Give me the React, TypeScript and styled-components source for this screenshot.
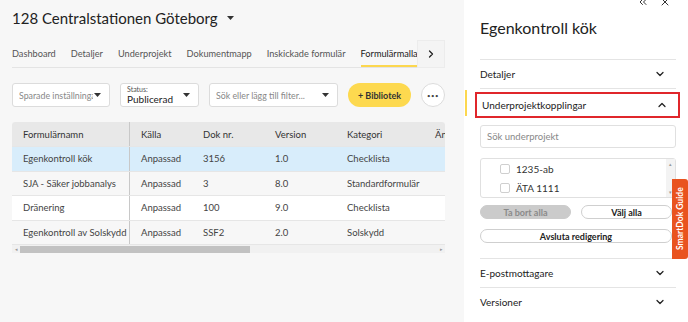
import React from 'react';
import styled, { createGlobalStyle } from 'styled-components';
import { ChevronDown, ChevronUp, ChevronRight, ChevronsLeft, X } from 'lucide-react';

const GlobalStyle = createGlobalStyle`
  html, body {
    margin: 0;
    padding: 0;
    background: #ffffff;
    font-family: Lato, "Open Sans", "Liberation Sans", sans-serif;
    color: #333;
    overflow: hidden;
  }
  * { box-sizing: border-box; }
`;

const tabs = ['Dashboard', 'Detaljer', 'Underprojekt', 'Dokumentmapp', 'Inskickade formulär', 'Formulärmallar'];

const rows = [
  { name: 'Egenkontroll kök', source: 'Anpassad', doc: '3156', version: '1.0', category: 'Checklista' },
  { name: 'SJA - Säker jobbanalys', source: 'Anpassad', doc: '3', version: '8.0', category: 'Standardformulär' },
  { name: 'Dränering', source: 'Anpassad', doc: '100', version: '9.0', category: 'Checklista' },
  { name: 'Egenkontroll av Solskydd', source: 'Anpassad', doc: 'SSF2', version: '2.0', category: 'Solskydd' },
];

const columns = [118, 62, 72, 72, 88, 40];

const Caret = () => (
  <svg width="7" height="4" viewBox="0 0 7 4" style={{ flexShrink: 0 }}>
    <path d="M0 0h7L3.5 4z" fill="#333" />
  </svg>
);

const App: React.FC = () => {
  return (
    <Page>
      <GlobalStyle />
      <Main>
        <TitleRow>
          <Title>128 Centralstationen Göteborg</Title>
          <Caret />
        </TitleRow>

        <TabBar>
          <Tabs>
            {tabs.map((t) => (
              <Tab key={t} $active={t === 'Formulärmallar'}>{t}</Tab>
            ))}
          </Tabs>
          <TabScroll>
            <ChevronRight size={12} strokeWidth={2.5} color="#222" />
          </TabScroll>
        </TabBar>

        <Filters>
          <Select $width={98}>
            <Placeholder>Sparade inställningar</Placeholder>
            <Caret />
          </Select>
          <Select $width={79}>
            <StatusValue>
              <small>Status:</small>
              <span>Publicerad</span>
            </StatusValue>
            <Caret />
          </Select>
          <Select $width={129}>
            <Placeholder>Sök eller lägg till filter...</Placeholder>
            <Caret />
          </Select>
          <LibraryButton>+ Bibliotek</LibraryButton>
          <MoreButton>•••</MoreButton>
        </Filters>

        <Table>
          <HeaderRow>
            {['Formulärnamn', 'Källa', 'Dok nr.', 'Version', 'Kategori', 'Ändrad'].map((h, i) => (
              <Cell key={h} $width={columns[i]} $frozen={i === 0}>{h}</Cell>
            ))}
          </HeaderRow>
          {rows.map((r, idx) => (
            <Row key={r.name} $variant={idx === 0 ? 'selected' : idx % 2 === 1 ? 'alt' : 'plain'}>
              <Cell $width={columns[0]} $frozen>{r.name}</Cell>
              <Cell $width={columns[1]}>{r.source}</Cell>
              <Cell $width={columns[2]}>{r.doc}</Cell>
              <Cell $width={columns[3]}>{r.version}</Cell>
              <Cell $width={columns[4]}>{r.category}</Cell>
              <Cell $width={columns[5]} />
            </Row>
          ))}
          <HScroll>
            <ScrollArrow>◂</ScrollArrow>
            <ScrollTrack>
              <ScrollThumb />
            </ScrollTrack>
            <ScrollArrow>▸</ScrollArrow>
          </HScroll>
        </Table>
      </Main>

      <Panel>
        <ActiveMarker />
        <PanelTools>
          <ChevronsLeft size={12} strokeWidth={2} color="#333" />
          <X size={12} strokeWidth={2} color="#333" />
        </PanelTools>
        <PanelTitle>Egenkontroll kök</PanelTitle>

        <Section>
          <SectionHeader>
            <span>Detaljer</span>
            <ChevronDown size={12} strokeWidth={2.5} />
          </SectionHeader>
        </Section>

        <Section $open>
          <SectionHeader $highlight>
            <span>Underprojektkopplingar</span>
            <ChevronUp size={12} strokeWidth={2.5} />
          </SectionHeader>
          <SearchInput>Sök underprojekt</SearchInput>
          <ListBox>
            <ListItems>
              <ListItem><Checkbox />1235-ab</ListItem>
              <ListItem><Checkbox />ÄTA 1111</ListItem>
            </ListItems>
            <VScroll>
              <span>▴</span>
              <span>▾</span>
            </VScroll>
          </ListBox>
          <ButtonRow>
            <PillButton $disabled>Ta bort alla</PillButton>
            <PillButton>Välj alla</PillButton>
          </ButtonRow>
          <WideButton>Avsluta redigering</WideButton>
        </Section>

        <Section>
          <SectionHeader>
            <span>E-postmottagare</span>
            <ChevronDown size={12} strokeWidth={2.5} />
          </SectionHeader>
        </Section>
        <Section $last>
          <SectionHeader>
            <span>Versioner</span>
            <ChevronDown size={12} strokeWidth={2.5} />
          </SectionHeader>
        </Section>
      </Panel>

      <GuideTab>SmartDok Guide</GuideTab>
    </Page>
  );
};

const Page = styled.div`
  display: flex;
  width: 688px;
  height: 322px;
  position: relative;
  overflow: hidden;
`;

const Main = styled.div`
  width: 464px;
  flex-shrink: 0;
  background: #f7f7f7;
  padding: 6px 19px 0 12px;
`;

const TitleRow = styled.div`
  display: flex;
  align-items: center;
  gap: 9px;
  height: 24px;
`;

const Title = styled.h1`
  margin: 0;
  font-size: 15px;
  font-weight: 400;
  color: #222;
`;

const TabBar = styled.div`
  display: flex;
  margin-top: 10px;
  height: 28px;
  border-bottom: 1px solid #e4e4e4;
`;

const Tabs = styled.div`
  display: flex;
  gap: 15px;
  flex: 1;
  overflow: hidden;
  white-space: nowrap;
`;

const Tab = styled.div<{ $active?: boolean }>`
  font-size: 9.2px;
  color: ${({ $active }) => ($active ? '#222' : '#555')};
  line-height: 27px;
  border-bottom: 3px solid ${({ $active }) => ($active ? '#fcd74f' : 'transparent')};
  height: 28px;
`;

const TabScroll = styled.div`
  width: 28px;
  height: 28px;
  display: flex;
  align-items: center;
  justify-content: center;
  background: #f4f4f4;
  border: 1px solid #ececec;
`;

const Filters = styled.div`
  display: flex;
  gap: 10px;
  margin-top: 15px;
  height: 24px;
`;

const Select = styled.div<{ $width: number }>`
  width: ${({ $width }) => $width}px;
  background: #fff;
  border: 1px solid #dcdcdc;
  border-radius: 3px;
  display: flex;
  align-items: center;
  padding: 0 8px 0 6px;
  gap: 1px;
  overflow: hidden;
`;

const Placeholder = styled.span`
  flex: 1;
  font-size: 8.8px;
  color: #888;
  white-space: nowrap;
  overflow: hidden;
`;

const StatusValue = styled.div`
  flex: 1;
  display: flex;
  flex-direction: column;
  line-height: 1;

  small {
    font-size: 7px;
    color: #555;
  }
  span {
    font-size: 10px;
    color: #222;
    margin-top: 1px;
  }
`;

const LibraryButton = styled.div`
  width: 63px;
  background: #fdd94f;
  border-radius: 12px;
  font-size: 9px;
  font-weight: 700;
  color: #333;
  display: flex;
  align-items: center;
  justify-content: center;
`;

const MoreButton = styled.div`
  width: 24px;
  height: 24px;
  border-radius: 50%;
  background: #fff;
  border: 1px solid #dcdcdc;
  font-size: 6px;
  letter-spacing: 0.5px;
  color: #444;
  display: flex;
  align-items: center;
  justify-content: center;
`;

const Table = styled.div`
  margin-top: 15px;
  width: 433px;
  background: #fff;
  border-radius: 3px 3px 0 0;
  overflow: hidden;
`;

const HeaderRow = styled.div`
  display: flex;
  height: 24px;
  background: #e8e8e8;
  color: #333;
`;

const Row = styled.div<{ $variant: 'selected' | 'alt' | 'plain' }>`
  display: flex;
  height: 24.5px;
  border-top: 1px solid #e6e6e6;
  background: ${({ $variant }) =>
    $variant === 'selected' ? '#d8edfb' : $variant === 'alt' ? '#f7f7f7' : '#ffffff'};
  color: #444;
`;

const Cell = styled.div<{ $width: number; $frozen?: boolean }>`
  width: ${({ $width }) => $width}px;
  flex-shrink: 0;
  padding-left: 11px;
  font-size: 9.5px;
  display: flex;
  align-items: center;
  white-space: nowrap;
  overflow: hidden;
  border-right: ${({ $frozen }) => ($frozen ? '1px solid #c8c8c8' : 'none')};
`;

const HScroll = styled.div`
  display: flex;
  align-items: center;
  height: 9px;
  background: #f1f1f1;
  border-top: 1px solid #e6e6e6;
`;

const ScrollArrow = styled.span`
  width: 8px;
  font-size: 5px;
  color: #999;
  text-align: center;
`;

const ScrollTrack = styled.div`
  flex: 1;
  height: 7px;
`;

const ScrollThumb = styled.div`
  width: 230px;
  height: 7px;
  background: #c2c2c2;
`;

const Panel = styled.div`
  position: relative;
  flex: 1;
  background: #fff;
  padding: 0 12px 0 16px;
`;

const ActiveMarker = styled.div`
  position: absolute;
  left: 1px;
  top: 90px;
  width: 2px;
  height: 26px;
  background: #fcd74f;
`;

const PanelTools = styled.div`
  display: flex;
  justify-content: flex-end;
  gap: 10px;
  height: 8px;
  margin-top: -4px;
  padding-right: 5px;
`;

const PanelTitle = styled.h2`
  margin: 13px 0 0;
  font-size: 16px;
  font-weight: 400;
  color: #222;
  line-height: 22px;
  padding-bottom: 20px;
  border-bottom: 1px solid #e4e4e4;
`;

const Section = styled.div<{ $open?: boolean; $last?: boolean }>`
  border-bottom: ${({ $last }) => ($last ? 'none' : '1px solid #e4e4e4')};
  padding-bottom: ${({ $open }) => ($open ? '15px' : '0')};
`;

const SectionHeader = styled.div<{ $highlight?: boolean }>`
  display: flex;
  align-items: center;
  justify-content: space-between;
  height: 28px;
  font-size: 10px;
  color: #222;
  padding-right: 10px;
  ${({ $highlight }) =>
    $highlight &&
    `
    margin: 3px -4px 0 -5px;
    padding: 0 10px 0 5px;
    height: 26px;
    border: 2px solid #e0262b;
  `}
`;

const SearchInput = styled.div`
  margin-top: 7px;
  height: 23px;
  border: 1px solid #e0e0e0;
  border-radius: 3px;
  font-size: 9.5px;
  color: #888;
  display: flex;
  align-items: center;
  padding-left: 6px;
`;

const ListBox = styled.div`
  margin-top: 10px;
  height: 40px;
  border: 1px solid #e0e0e0;
  border-radius: 3px;
  display: flex;
`;

const ListItems = styled.div`
  flex: 1;
  display: flex;
  flex-direction: column;
  justify-content: space-around;
  padding: 0 0 0 19px;
`;

const ListItem = styled.div`
  display: flex;
  align-items: center;
  gap: 6px;
  font-size: 10px;
  color: #333;
`;

const Checkbox = styled.span`
  width: 10px;
  height: 10px;
  border: 1px solid #cfcfcf;
  border-radius: 2px;
  background: #fff;
`;

const VScroll = styled.div`
  width: 9px;
  display: flex;
  flex-direction: column;
  justify-content: space-between;
  align-items: center;
  background: #f3f3f3;
  font-size: 5px;
  color: #999;
  padding: 2px 0;
`;

const ButtonRow = styled.div`
  display: flex;
  gap: 10px;
  margin-top: 7px;
  padding-right: 4px;
`;

const PillButton = styled.div<{ $disabled?: boolean }>`
  flex: 1;
  height: 14px;
  border-radius: 7px;
  font-size: 9px;
  font-weight: 700;
  display: flex;
  align-items: center;
  justify-content: center;
  background: ${({ $disabled }) => ($disabled ? '#cbcbcb' : '#fff')};
  color: ${({ $disabled }) => ($disabled ? '#8a8a8a' : '#222')};
  border: 1px solid ${({ $disabled }) => ($disabled ? '#cbcbcb' : '#cfcfcf')};
`;

const WideButton = styled.div`
  margin-top: 10px;
  margin-right: 4px;
  height: 14px;
  border-radius: 7px;
  border: 1px solid #cfcfcf;
  font-size: 9px;
  font-weight: 700;
  color: #222;
  display: flex;
  align-items: center;
  justify-content: center;
`;

const GuideTab = styled.div`
  position: absolute;
  right: 0;
  top: 179px;
  width: 16px;
  height: 80px;
  background: #e9531f;
  border-radius: 3px 0 0 3px;
  color: #fff;
  font-size: 8.5px;
  font-weight: 700;
  writing-mode: vertical-rl;
  transform: rotate(180deg);
  display: flex;
  align-items: center;
  justify-content: center;
  white-space: nowrap;
`;

export default App;
